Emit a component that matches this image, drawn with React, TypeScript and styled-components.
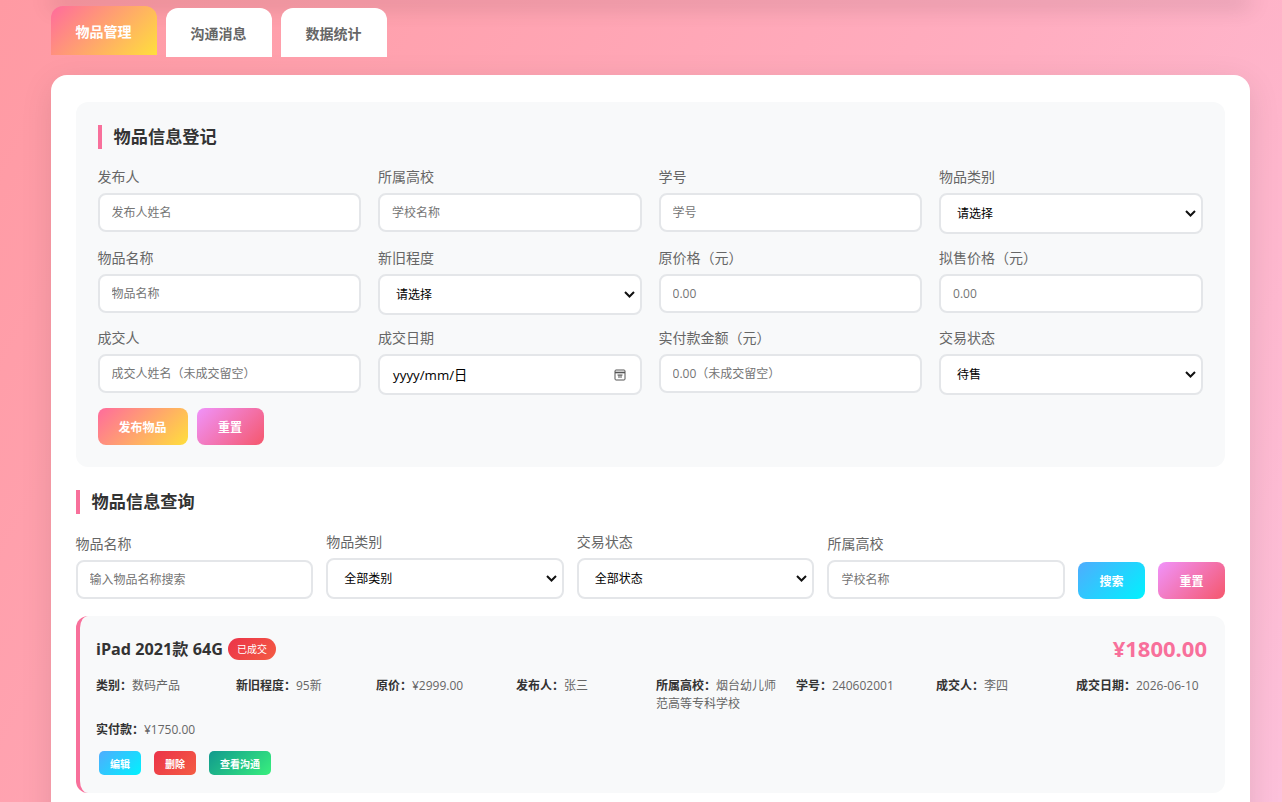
import React from "react";
import styled, { createGlobalStyle } from "styled-components";

const GlobalStyle = createGlobalStyle`
  * {
    box-sizing: border-box;
  }

  html,
  body {
    margin: 0;
    padding: 0;
    height: 802px;
    overflow: hidden;
    font-family: "Open Sans", "Noto Sans CJK SC", sans-serif;
  }
`;

const Page = styled.div`
  position: relative;
  height: 802px;
  overflow: hidden;
  padding: 8px 32px 0 50.6px;
  background: linear-gradient(120deg, #ff9aa3 0%, #ffadc0 60%, #fdc0da 100%);
`;

const HeaderShadow = styled.div`
  position: absolute;
  top: -6px;
  left: 51px;
  width: 1199px;
  height: 6px;
  box-shadow: 0 4px 22px rgba(0, 0, 0, 0.3);
`;

const Tabs = styled.nav`
  display: flex;
  gap: 9px;
  margin-bottom: 18px;
`;

const Tab = styled.button<{ $active?: boolean }>`
  width: 106px;
  height: 49px;
  padding: 0;
  border: none;
  border-radius: 12px 12px 0 0;
  font-family: inherit;
  font-size: 14px;
  font-weight: 700;
  color: ${(props) => (props.$active ? "#fff" : "#666")};
  background: ${(props) =>
    props.$active ? "linear-gradient(135deg, #ff6b9d, #ffdf3c)" : "#fff"};
  transform: translateY(${(props) => (props.$active ? "-2px" : "0")});
`;

const Panel = styled.main`
  height: 900px;
  padding: 27px 25px;
  border-radius: 16px;
  background: #fff;
  box-shadow: 0 8px 32px rgba(0, 0, 0, 0.1);
`;

const FormSection = styled.section`
  padding: 23px 22px 22px;
  margin-bottom: 23px;
  border-radius: 12px;
  background: #f8f9fa;
`;

const SectionTitle = styled.h2`
  height: 24px;
  margin: 0 0 17px;
  padding-left: 12px;
  border-left: 4px solid #f8709b;
  font-size: 17.2px;
  font-weight: 700;
  line-height: 24px;
  color: #333;
`;

const FormGrid = styled.div`
  display: grid;
  grid-template-columns: repeat(4, 263.5px);
  gap: 12.5px 17px;
`;

const Field = styled.label`
  display: flex;
  flex-direction: column;
  min-width: 0;
`;

const FilterField = styled(Field)`
  flex: 1;
`;

const FieldLabel = styled.span`
  margin-bottom: 6px;
  font-size: 14px;
  line-height: 21px;
  color: #666;
`;

const TextInput = styled.input`
  width: 100%;
  height: 39px;
  padding: 0 12px;
  border: 2px solid #e4e6e9;
  border-radius: 8px;
  outline: none;
  background: #fff;
  font-family: inherit;
  font-size: 12px;

  &::placeholder {
    color: #757575;
  }
`;

const Select = styled.select`
  width: 100%;
  height: 41px;
  padding: 0 0 0 16px;
  border: 2px solid #e4e6e9;
  border-radius: 8px;
  outline: none;
  appearance: none;
  background: #fff
    url("data:image/svg+xml,%3Csvg xmlns='http://www.w3.org/2000/svg' width='11' height='7' viewBox='0 0 11 7'%3E%3Cpath d='M1 1l4.5 4.5L10 1' fill='none' stroke='%23111' stroke-width='2'/%3E%3C/svg%3E")
    no-repeat right 5px center;
  font-family: inherit;
  font-size: 12px;
  color: #000;
`;

const DateBox = styled.div`
  display: flex;
  align-items: center;
  justify-content: space-between;
  height: 41px;
  padding: 0 14px 0 13px;
  border: 2px solid #e4e6e9;
  border-radius: 8px;
  background: #fff;
  font-size: 13.3px;
  color: #000;
`;

const FormActions = styled.div`
  display: flex;
  gap: 9px;
  margin-top: 13px;
`;

const GradientButton = styled.button<{ $gradient: string; $width: number }>`
  width: ${(props) => props.$width}px;
  height: 37px;
  flex-shrink: 0;
  padding: 0;
  border: none;
  border-radius: 8px;
  background: ${(props) => props.$gradient};
  font-family: inherit;
  font-size: 12px;
  font-weight: 700;
  color: #fff;
`;

const FilterRow = styled.div`
  display: flex;
  align-items: flex-end;
  gap: 13px;
  margin-bottom: 17px;
`;

const ItemCard = styled.article`
  padding: 16px 18px 18px 16.4px;
  border-left: 4px solid #f8709b;
  border-radius: 12px;
  background: #f8f9fa;
`;

const CardHead = styled.div`
  display: flex;
  align-items: center;
  justify-content: space-between;
  height: 32px;
  margin-bottom: 13px;
`;

const CardTitle = styled.div`
  display: flex;
  align-items: center;
  gap: 5px;
`;

const ItemName = styled.h3`
  margin: 0;
  font-size: 16.2px;
  font-weight: 700;
  color: #333;
`;

const Badge = styled.span`
  width: 48px;
  height: 22px;
  margin-top: 2px;
  border-radius: 11px;
  background: linear-gradient(135deg, #eb3349, #f45c43);
  font-size: 10px;
  line-height: 22px;
  text-align: center;
  color: #fff;
`;

const Price = styled.strong`
  font-size: 22px;
  font-weight: 700;
  color: #f8709b;
`;

const Details = styled.div`
  display: grid;
  grid-template-columns: repeat(8, 128px);
  gap: 8px 12px;
  margin-bottom: 12px;
`;

const Detail = styled.div`
  font-size: 12px;
  line-height: 18px;
  color: #666;

  b {
    font-weight: 700;
    color: #333;
  }
`;

const CardActions = styled.div`
  display: flex;
  gap: 13px;
  padding-left: 3px;
`;

const SmallButton = styled.button<{ $gradient: string; $width: number }>`
  width: ${(props) => props.$width}px;
  height: 24px;
  padding: 0;
  border: none;
  border-radius: 5px;
  background: ${(props) => props.$gradient};
  font-family: inherit;
  font-size: 10px;
  font-weight: 700;
  color: #fff;
`;

const PINK = "linear-gradient(135deg, #ff6b9d, #ffdf3c)";
const ROSE = "linear-gradient(135deg, #f093fb, #f5576c)";
const BLUE = "linear-gradient(135deg, #4facfe, #00f2fe)";
const RED = "linear-gradient(135deg, #eb3349, #f45c43)";
const GREEN = "linear-gradient(135deg, #11998e, #38ef7d)";

const details = [
  ["类别：", "数码产品"],
  ["新旧程度：", "95新"],
  ["原价：", "¥2999.00"],
  ["发布人：", "张三"],
  ["所属高校：", "烟台幼儿师范高等专科学校"],
  ["学号：", "240602001"],
  ["成交人：", "李四"],
  ["成交日期：", "2026-06-10"],
  ["实付款：", "¥1750.00"],
];

const CalendarIcon = () => (
  <svg width="12" height="12" viewBox="0 0 12 12" fill="none" stroke="#555" strokeWidth="1">
    <rect x="1" y="1" width="10" height="10" rx="1" />
    <path d="M1 3.5h10" strokeWidth="1.6" />
    <path d="M3.5 6h5M5 6v3M7 6v3" />
  </svg>
);

export default function App() {
  return (
    <>
      <GlobalStyle />
      <Page>
        <HeaderShadow />
        <Tabs>
          <Tab $active>物品管理</Tab>
          <Tab>沟通消息</Tab>
          <Tab>数据统计</Tab>
        </Tabs>
        <Panel>
          <FormSection>
            <SectionTitle>物品信息登记</SectionTitle>
            <FormGrid>
              <Field>
                <FieldLabel>发布人</FieldLabel>
                <TextInput placeholder="发布人姓名" />
              </Field>
              <Field>
                <FieldLabel>所属高校</FieldLabel>
                <TextInput placeholder="学校名称" />
              </Field>
              <Field>
                <FieldLabel>学号</FieldLabel>
                <TextInput placeholder="学号" />
              </Field>
              <Field>
                <FieldLabel>物品类别</FieldLabel>
                <Select>
                  <option>请选择</option>
                </Select>
              </Field>
              <Field>
                <FieldLabel>物品名称</FieldLabel>
                <TextInput placeholder="物品名称" />
              </Field>
              <Field>
                <FieldLabel>新旧程度</FieldLabel>
                <Select>
                  <option>请选择</option>
                </Select>
              </Field>
              <Field>
                <FieldLabel>原价格（元）</FieldLabel>
                <TextInput placeholder="0.00" />
              </Field>
              <Field>
                <FieldLabel>拟售价格（元）</FieldLabel>
                <TextInput placeholder="0.00" />
              </Field>
              <Field>
                <FieldLabel>成交人</FieldLabel>
                <TextInput placeholder="成交人姓名（未成交留空）" />
              </Field>
              <Field>
                <FieldLabel>成交日期</FieldLabel>
                <DateBox>
                  <span>yyyy/mm/日</span>
                  <CalendarIcon />
                </DateBox>
              </Field>
              <Field>
                <FieldLabel>实付款金额（元）</FieldLabel>
                <TextInput placeholder="0.00（未成交留空）" />
              </Field>
              <Field>
                <FieldLabel>交易状态</FieldLabel>
                <Select>
                  <option>待售</option>
                </Select>
              </Field>
            </FormGrid>
            <FormActions>
              <GradientButton $gradient={PINK} $width={90}>发布物品</GradientButton>
              <GradientButton $gradient={ROSE} $width={67}>重置</GradientButton>
            </FormActions>
          </FormSection>

          <SectionTitle>物品信息查询</SectionTitle>
          <FilterRow>
            <FilterField>
              <FieldLabel>物品名称</FieldLabel>
              <TextInput placeholder="输入物品名称搜索" />
            </FilterField>
            <FilterField>
              <FieldLabel>物品类别</FieldLabel>
              <Select>
                <option>全部类别</option>
              </Select>
            </FilterField>
            <FilterField>
              <FieldLabel>交易状态</FieldLabel>
              <Select>
                <option>全部状态</option>
              </Select>
            </FilterField>
            <FilterField>
              <FieldLabel>所属高校</FieldLabel>
              <TextInput placeholder="学校名称" />
            </FilterField>
            <GradientButton $gradient={BLUE} $width={67}>搜索</GradientButton>
            <GradientButton $gradient={ROSE} $width={67}>重置</GradientButton>
          </FilterRow>

          <ItemCard>
            <CardHead>
              <CardTitle>
                <ItemName>iPad 2021款 64G</ItemName>
                <Badge>已成交</Badge>
              </CardTitle>
              <Price>¥1800.00</Price>
            </CardHead>
            <Details>
              {details.map(([name, value]) => (
                <Detail key={name}>
                  <b>{name}</b>
                  {value}
                </Detail>
              ))}
            </Details>
            <CardActions>
              <SmallButton $gradient={BLUE} $width={42}>编辑</SmallButton>
              <SmallButton $gradient={RED} $width={42}>删除</SmallButton>
              <SmallButton $gradient={GREEN} $width={62}>查看沟通</SmallButton>
            </CardActions>
          </ItemCard>
        </Panel>
      </Page>
    </>
  );
}
